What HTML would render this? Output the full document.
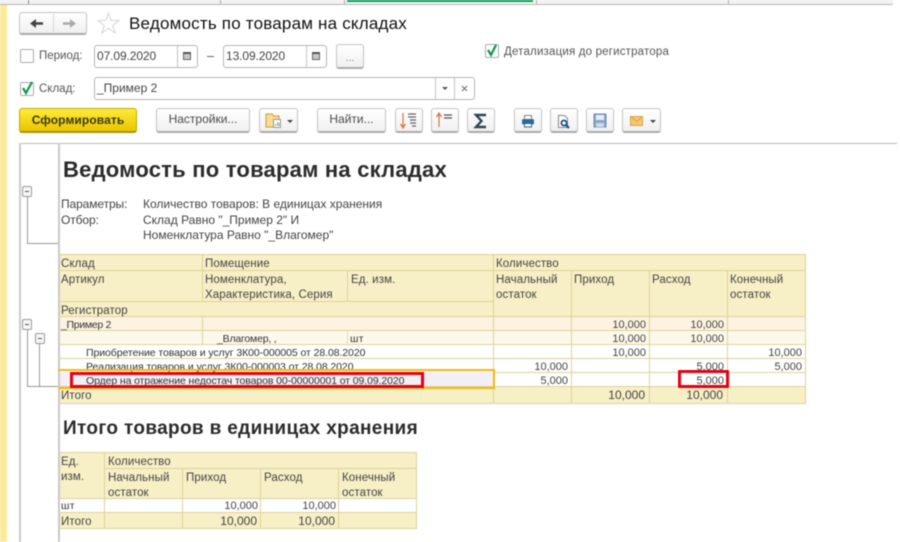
<!DOCTYPE html>
<html lang="ru"><head><meta charset="utf-8">
<style>
html,body{margin:0;padding:0;background:#fff}
#p{position:relative;width:900px;height:542px;overflow:hidden;background:#fff;font-family:"Liberation Sans",sans-serif;font-size:12px;color:#444;filter:blur(.45px)}
#p div{position:absolute;box-sizing:border-box;white-space:nowrap}
.t{line-height:14px;font-size:11.5px;letter-spacing:.1px}
.p{font-size:12px;letter-spacing:0}
.s{font-size:10.5px;color:#333;letter-spacing:-.08px}
.btn{background:linear-gradient(#fff,#f0f0f0);border:1px solid #c4c4c4;border-bottom:2px solid #aaa;border-radius:3px;text-align:center;color:#4a4a4a;line-height:21px}
.in{background:#fff;border:1px solid #b4b4b4;border-radius:3px}
.cb{width:14px;height:14px;border:1px solid #aaa;border-radius:2px;background:#fff}
.h{background:#f7efc6}.l{background:#ddd29c}
.n{text-align:right;color:#444;line-height:14px;font-size:11px}
.b{font-size:12px}
.mn{width:10px;height:11px;border:1px solid #999;border-radius:2px;background:#f6f6f6}
.mn:after{content:"";position:absolute;left:2px;top:4px;width:4px;height:1px;background:#555}
svg{position:absolute;left:0;top:0;overflow:visible}
</style></head><body><div id="p">
<!-- top tabs -->
<div style="left:0;top:0;width:893px;height:5px;background:#f2f2f2;border-bottom:1px solid #b8b8b8"></div>
<div style="left:28px;top:0;width:1px;height:4px;background:#888"></div>
<div style="left:220px;top:0;width:1px;height:4px;background:#aaa"></div>
<div style="left:344px;top:0;width:1px;height:4px;background:#aaa"></div>
<div style="left:347px;top:0;width:186px;height:2px;background:#0f9d58"></div>
<div style="left:536px;top:0;width:1px;height:4px;background:#aaa"></div>
<div style="left:728px;top:0;width:1px;height:4px;background:#aaa"></div>
<div style="left:0;top:5px;width:7px;height:537px;background:#fde99a"></div>

<!-- header -->
<div class="btn" style="left:19px;top:12px;width:68px;height:23px"></div>
<div style="left:53px;top:14px;width:1px;height:18px;background:#d5d5d5"></div>
<svg width="130" height="40">
<path d="M30 23.500l6-4.500v3.200h7v2.600h-7v3.200z" fill="#444"/>
<path d="M76 23.500l-6-4.500v3.200h-7v2.600h7v3.200z" fill="#aaa"/>
<path d="M108.500 13l2.600 7.400 7.900.2-6.200 4.800 2.200 7.500-6.500-4.400-6.500 4.400 2.200-7.500-6.200-4.800 7.900-.2z" fill="#fff" stroke="#d4d4d4"/>
</svg>
<div style="left:129px;top:14px;font-size:17px;line-height:20px;color:#111;letter-spacing:.2px">Ведомость по товарам на складах</div>

<div class="cb" style="left:20px;top:49px"></div>
<div class="t" style="left:39px;top:49px;color:#555;letter-spacing:0">Период:</div>
<div class="in" style="left:94px;top:45px;width:104px;height:23px"></div>
<div style="left:177px;top:46px;width:1px;height:21px;background:#c4c4c4"></div>
<div class="t p" style="left:97px;top:49px;letter-spacing:-.1px">07.09.2020</div>
<div style="left:207px;top:56px;width:7px;height:1px;background:#666"></div>
<div class="in" style="left:223px;top:45px;width:104px;height:23px"></div>
<div style="left:306px;top:46px;width:1px;height:21px;background:#c4c4c4"></div>
<div class="t p" style="left:226px;top:49px;letter-spacing:-.1px">13.09.2020</div>
<svg width="330" height="70"><g fill="#c8c8c8" stroke="#666"><rect x="183.500" y="52.500" width="7" height="7"/><rect x="312.500" y="52.500" width="7" height="7"/></g><path d="M183 52h8v2h-8zM312 52h8v2h-8z" fill="#555"/></svg>
<div class="btn" style="left:336px;top:44px;width:28px;height:25px;line-height:27px;color:#888;font-size:11px">...</div>
<div class="cb" style="left:485px;top:44px"></div>
<svg width="510" height="105"><path d="M488 50l3 5 5-10" fill="none" stroke="#12994f" stroke-width="2.200"/><path d="M23 88l3 5 6-11" fill="none" stroke="#12994f" stroke-width="2.200"/></svg>
<div class="t" style="left:504px;top:45px;color:#555;letter-spacing:.18px">Детализация до регистратора</div>

<div class="cb" style="left:20px;top:82px;z-index:0"></div>
<svg width="40" height="105" style="z-index:1"><path d="M23 88l3 5 6-11" fill="none" stroke="#12994f" stroke-width="2.200"/></svg>
<div class="t" style="left:39px;top:82px;color:#555;letter-spacing:0">Склад:</div>
<div class="in" style="left:94px;top:77px;width:381px;height:23px"></div>
<div style="left:435px;top:78px;width:1px;height:21px;background:#c4c4c4"></div>
<div style="left:454px;top:78px;width:1px;height:21px;background:#c4c4c4"></div>
<div class="t p" style="left:97px;top:81px">_Пример 2</div>
<svg width="480" height="100"><path d="M442 87h6l-3 3z" fill="#555"/><path d="M462 86l5 5M467 86l-5 5" stroke="#777" stroke-width="1.200"/></svg>

<!-- toolbar -->
<div style="left:19px;top:108px;width:118px;height:25px;background:linear-gradient(#fdeb3a,#eac500);border:1px solid #c9a800;border-bottom:2px solid #a98f10;border-radius:3px;text-align:center;font-weight:bold;color:#40391a;line-height:22px;letter-spacing:.1px">Сформировать</div>
<div class="btn" style="left:156px;top:108px;width:94px;height:25px">Настройки...</div>
<div class="btn" style="left:259px;top:108px;width:39px;height:25px"></div>
<div class="btn" style="left:317px;top:108px;width:69px;height:25px">Найти...</div>
<div class="btn" style="left:395px;top:108px;width:28px;height:25px"></div>
<div class="btn" style="left:431px;top:108px;width:28px;height:25px"></div>
<div class="btn" style="left:467px;top:108px;width:28px;height:25px"></div>
<div class="btn" style="left:514px;top:108px;width:28px;height:25px"></div>
<div class="btn" style="left:550px;top:108px;width:28px;height:25px"></div>
<div class="btn" style="left:586px;top:108px;width:28px;height:25px"></div>
<div class="btn" style="left:622px;top:108px;width:39px;height:25px"></div>
<svg width="670" height="140">
<path d="M266 114h6l2 2h5v11h-13z" fill="#f7dd96" stroke="#c99a3a"/><rect x="273.500" y="119.500" width="7" height="8" fill="#fff" stroke="#999"/><path d="M275.500 126v-2M277.500 126v-4M279 126v-3" stroke="#8a7"/>
<path d="M287 120h6l-3 3z" fill="#444"/>
<path d="M403 113v14M400.500 124l2.500 4 2.500-4" fill="none" stroke="#d9743a" stroke-width="1.200"/><path d="M408 114h8M408 117h8M410 120h6M410 123h6M412 126h4" stroke="#666" stroke-width="1.200"/>
<path d="M439 127v-13M436.500 117l2.500-4 2.500 4" fill="none" stroke="#d9743a" stroke-width="1.200"/><path d="M444 115h8M444 118h8" stroke="#555" stroke-width="1.200"/>
<path d="M486 115h-10l5.500 6-5.500 6h10" fill="none" stroke="#2c4658" stroke-width="2.400"/>
<rect x="524.500" y="115.500" width="7" height="4" fill="#fff" stroke="#888"/><rect x="522" y="119" width="12" height="5.500" rx="1.500" fill="#2c6a9c"/><rect x="524.500" y="123.500" width="7" height="3.500" fill="#fff" stroke="#2c6a9c"/>
<path d="M558.500 115.500h6l3 3v9h-9z" fill="#fff" stroke="#888"/><circle cx="564" cy="123" r="2.600" fill="#fff" stroke="#14507e" stroke-width="1.700"/><path d="M566 125l3 3" stroke="#14507e" stroke-width="2"/>
<rect x="594" y="114" width="12" height="13" fill="#86a6cc" stroke="#6a8cb5"/><rect x="596" y="115" width="8" height="5" fill="#e5edf5"/><rect x="596" y="123" width="8" height="4" fill="#cdd9e6"/>
<rect x="630.500" y="116.500" width="12" height="9" fill="#f5c771" stroke="#d9a44a"/><path d="M630.500 116.500l6 5 6-5" fill="none" stroke="#d9a44a"/>
<path d="M650 120h6l-3 3z" fill="#444"/>
</svg>

<!-- frames -->
<div style="left:19px;top:143px;width:878px;height:1px;background:#bbb"></div>
<div style="left:19px;top:143px;width:2px;height:399px;background:#ccc"></div>
<div style="left:58px;top:143px;width:2px;height:399px;background:#c8c8c8"></div>
<div style="left:27px;top:196px;width:1px;height:47px;background:#999"></div>
<div style="left:27px;top:243px;width:31px;height:1px;background:#999"></div>
<div class="mn" style="left:22px;top:186px"></div>
<div style="left:27px;top:329px;width:1px;height:57px;background:#999"></div>
<div style="left:39px;top:343px;width:1px;height:43px;background:#999"></div>
<div style="left:27px;top:386px;width:31px;height:1px;background:#999"></div>
<div class="mn" style="left:22px;top:319px"></div>
<div class="mn" style="left:35px;top:333px"></div>

<div style="left:63px;top:157px;font-size:22px;line-height:26px;font-weight:bold;color:#2b2b2b;letter-spacing:.22px">Ведомость по товарам на складах</div>
<div class="t p" style="left:61px;top:197px;letter-spacing:-.1px">Параметры:</div>
<div class="t p" style="left:143px;top:197px">Количество товаров: В единицах хранения</div>
<div class="t p" style="left:61px;top:213px;letter-spacing:-.1px">Отбор:</div>
<div class="t p" style="left:143px;top:213px">Склад Равно "_Пример 2" И</div>
<div class="t p" style="left:143px;top:228px">Номенклатура Равно "_Влагомер"</div>

<!-- main table backgrounds -->
<div class="h" style="left:60px;top:254px;width:745px;height:63px"></div>
<div style="left:60px;top:317px;width:745px;height:14px;background:#fdf3e0"></div>
<div style="left:60px;top:331px;width:745px;height:13px;background:#fdf9ea"></div>
<div style="left:60px;top:372px;width:434px;height:15px;background:#f3eff5"></div>
<div class="h" style="left:60px;top:387px;width:745px;height:16px"></div>
<!-- h lines -->
<div class="l" style="left:58px;top:254px;width:747px;height:1px"></div>
<div class="l" style="left:58px;top:270px;width:747px;height:1px"></div>
<div class="l" style="left:58px;top:301px;width:435px;height:1px"></div>
<div class="l" style="left:58px;top:316px;width:747px;height:1px"></div>
<div class="l" style="left:58px;top:330px;width:747px;height:1px"></div>
<div class="l" style="left:58px;top:344px;width:747px;height:1px"></div>
<div class="l" style="left:58px;top:358px;width:747px;height:1px"></div>
<div class="l" style="left:493px;top:372px;width:312px;height:1px"></div>
<div class="l" style="left:58px;top:386px;width:747px;height:1px"></div>
<div class="l" style="left:58px;top:403px;width:747px;height:1px"></div>
<!-- v lines -->
<div class="l" style="left:202px;top:254px;width:1px;height:47px"></div>
<div class="l" style="left:202px;top:317px;width:1px;height:27px"></div>
<div class="l" style="left:347px;top:270px;width:1px;height:31px"></div>
<div style="left:347px;top:331px;width:1px;height:13px;background:#e5dcae"></div>
<div class="l" style="left:493px;top:254px;width:1px;height:149px"></div>
<div class="l" style="left:571px;top:270px;width:1px;height:133px"></div>
<div class="l" style="left:649px;top:270px;width:1px;height:133px"></div>
<div class="l" style="left:727px;top:270px;width:1px;height:133px"></div>
<div class="l" style="left:805px;top:254px;width:1px;height:150px"></div>

<div class="t" style="left:61px;top:257px">Склад</div>
<div class="t" style="left:205px;top:257px">Помещение</div>
<div class="t" style="left:496px;top:257px">Количество</div>
<div class="t" style="left:61px;top:273px">Артикул</div>
<div class="t" style="left:205px;top:273px;line-height:15px">Номенклатура,<br>Характеристика, Серия</div>
<div class="t" style="left:351px;top:273px">Ед. изм.</div>
<div class="t" style="left:496px;top:273px;line-height:15px">Начальный<br>остаток</div>
<div class="t" style="left:574px;top:273px">Приход</div>
<div class="t" style="left:652px;top:273px">Расход</div>
<div class="t" style="left:730px;top:273px;line-height:15px">Конечный<br>остаток</div>
<div class="t" style="left:61px;top:304px">Регистратор</div>

<div class="t s" style="left:61px;top:318px;letter-spacing:-.3px">_Пример 2</div>
<div class="t s" style="left:217px;top:332px;letter-spacing:-.2px">_Влагомер, ,</div>
<div class="t s" style="left:350px;top:332px;letter-spacing:.3px">шт</div>
<div class="t s" style="left:86px;top:346px">Приобретение товаров и услуг 3К00-000005 от 28.08.2020</div>
<div class="t s" style="left:86px;top:360px">Реализация товаров и услуг 3К00-000003 от 28.08.2020</div>
<div class="t s" style="left:86px;top:374px;letter-spacing:-.1px">Ордер на отражение недостач товаров 00-00000001 от 09.09.2020</div>
<div class="t" style="left:61px;top:389px">Итого</div>

<div class="n" style="left:572px;top:318px;width:74px">10,000</div>
<div class="n" style="left:650px;top:318px;width:74px">10,000</div>
<div class="n" style="left:572px;top:332px;width:74px">10,000</div>
<div class="n" style="left:650px;top:332px;width:74px">10,000</div>
<div class="n" style="left:572px;top:346px;width:74px">10,000</div>
<div class="n" style="left:728px;top:346px;width:74px">10,000</div>
<div class="n" style="left:494px;top:360px;width:74px">10,000</div>
<div class="n" style="left:650px;top:360px;width:74px">5,000</div>
<div class="n" style="left:728px;top:360px;width:74px">5,000</div>
<div class="n" style="left:494px;top:374px;width:74px">5,000</div>
<div class="n" style="left:650px;top:374px;width:74px">5,000</div>
<div class="n b" style="left:572px;top:388px;width:73px">10,000</div>
<div class="n b" style="left:650px;top:388px;width:73px">10,000</div>

<!-- highlights -->
<div style="left:58px;top:369px;width:437px;height:20px;border:2px solid #f3b90f;border-left:0"></div>
<div style="left:70px;top:372px;width:354px;height:16px;border:3px solid #e60012"></div>
<div style="left:678px;top:370px;width:51px;height:18px;border:3px solid #e60012;border-radius:1px"></div>

<!-- second section -->
<div style="left:63px;top:417px;font-size:19px;line-height:24px;font-weight:bold;color:#2b2b2b;letter-spacing:.35px">Итого товаров в единицах хранения</div>
<div class="h" style="left:60px;top:452px;width:357px;height:47px"></div>
<div class="h" style="left:60px;top:513px;width:357px;height:15px"></div>
<div class="l" style="left:58px;top:452px;width:359px;height:1px"></div>
<div class="l" style="left:104px;top:468px;width:313px;height:1px"></div>
<div class="l" style="left:58px;top:498px;width:359px;height:1px"></div>
<div class="l" style="left:58px;top:512px;width:359px;height:1px"></div>
<div class="l" style="left:58px;top:528px;width:359px;height:1px"></div>
<div class="l" style="left:104px;top:452px;width:1px;height:77px"></div>
<div class="l" style="left:182px;top:468px;width:1px;height:61px"></div>
<div class="l" style="left:260px;top:468px;width:1px;height:61px"></div>
<div class="l" style="left:338px;top:468px;width:1px;height:61px"></div>
<div class="l" style="left:416px;top:452px;width:1px;height:77px"></div>
<div class="t" style="left:61px;top:455px;line-height:15px">Ед.<br>изм.</div>
<div class="t" style="left:108px;top:455px">Количество</div>
<div class="t" style="left:108px;top:471px;line-height:15px">Начальный<br>остаток</div>
<div class="t" style="left:186px;top:471px">Приход</div>
<div class="t" style="left:264px;top:471px">Расход</div>
<div class="t" style="left:342px;top:471px;line-height:15px">Конечный<br>остаток</div>
<div class="t s" style="left:61px;top:499px;letter-spacing:.3px">шт</div>
<div class="n" style="left:184px;top:499px;width:74px">10,000</div>
<div class="n" style="left:262px;top:499px;width:74px">10,000</div>
<div class="t" style="left:61px;top:515px">Итого</div>
<div class="n b" style="left:184px;top:514px;width:73px">10,000</div>
<div class="n b" style="left:262px;top:514px;width:73px">10,000</div>
</div></body></html>
